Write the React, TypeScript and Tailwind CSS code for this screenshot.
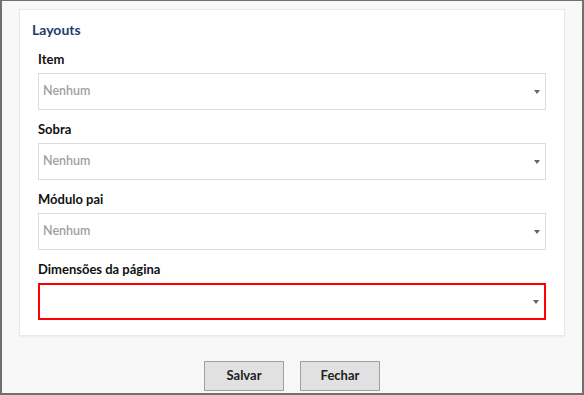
const fields = [
    { label: 'Item', value: 'Nenhum', invalid: false },
    { label: 'Sobra', value: 'Nenhum', invalid: false },
    { label: 'Módulo pai', value: 'Nenhum', invalid: false },
    { label: 'Dimensões da página', value: '', invalid: true },
];

const SelectBox = ({ value, invalid }: { value: string; invalid: boolean }) => (
    <div
        className={`relative h-[37px] flex items-center px-[4px] bg-white ${
            invalid ? 'border-2 border-[#ff0000]' : 'border border-[#dcdcdc]'
        }`}
    >
        <span className="text-[12.5px] text-[#a0a0a0] font-semibold">{value}</span>
        <svg
            className="absolute right-[5px] top-1/2 -translate-y-1/2"
            width="6"
            height="4"
            viewBox="0 0 6 4"
        >
            <path d="M0 0 L6 0 L3 4 Z" fill="#666" />
        </svg>
    </div>
);

export default function App() {
    return (
        <div
            className="w-[584px] h-[395px] bg-[#f8f8f8] border-t border-l-2 border-r-2 border-b-2 border-[#707070] overflow-hidden"
            style={{ fontFamily: 'Lato, "Open Sans", sans-serif' }}
        >
            {/* Form card */}
            <div className="ml-[17px] mt-[8px] w-[546px] bg-white border border-[#e6e9ef] shadow-[0_1px_2px_rgba(0,0,0,0.06)] pt-[10px] pb-[15px] px-[18px]">
                <h2 className="text-[14px] leading-[20px] font-bold text-[#233e6e] -ml-[6px]">Layouts</h2>
                <div className="mt-[11px] flex flex-col gap-[11px]">
                    {fields.map((f) => (
                        <div key={f.label} className="flex flex-col gap-[6px]">
                            <label className="text-[13px] leading-[16px] font-bold text-[#111]">{f.label}</label>
                            <SelectBox value={f.value} invalid={f.invalid} />
                        </div>
                    ))}
                </div>
            </div>

            {/* Actions */}
            <div className="mt-[25px] flex justify-center gap-[16px]">
                <button className="w-[80px] h-[30px] bg-[#e1e1e1] border border-[#a0a0a0] text-[13px] font-bold text-[#222]">
                    Salvar
                </button>
                <button className="w-[80px] h-[30px] bg-[#e1e1e1] border border-[#a0a0a0] text-[13px] font-bold text-[#222]">
                    Fechar
                </button>
            </div>
        </div>
    );
}
